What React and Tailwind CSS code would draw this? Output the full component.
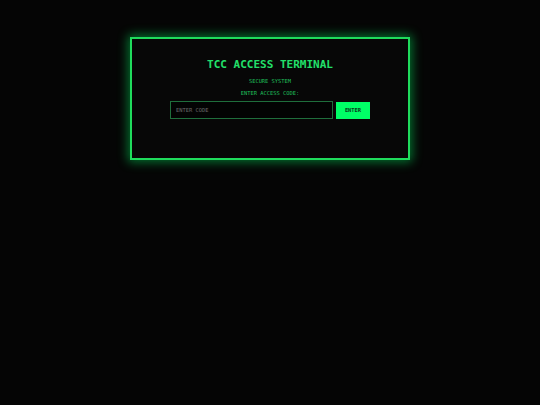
import React, { useState } from "react"

export default function App() {

    const [code, setCode] = useState("")

    return (
        <div className="min-h-screen w-full bg-[#050505] pt-[37px] font-['DejaVu_Sans_Mono',monospace]" >
            <div
                className="mx-auto w-[280px] h-[123px] border-2 border-[#1fdc5c] bg-[#070707]
                shadow-[0_0_10px_2px_rgba(0,255,102,0.45)] flex flex-col items-center pt-[19px]"
            >
                <h1 className="text-[11px] leading-[14px] font-bold text-[#22e06a] tracking-normal" >
                    TCC ACCESS TERMINAL
                </h1>
                <p className="mt-[5px] text-[5.4px] leading-[8px] text-[#1fbf5a]" >
                    SECURE SYSTEM
                </p>
                <p className="mt-[4px] text-[5.4px] leading-[8px] text-[#1fbf5a]" >
                    ENTER ACCESS CODE:
                </p>
                <div className="mt-[4px] flex items-center gap-[3px]" >
                    <input
                        value={code}
                        onChange={(e) => setCode(e.target.value)}
                        placeholder="ENTER CODE"
                        className="w-[163px] h-[18px] bg-[#030303] border border-[#1f6e3c] px-[5px]
                        text-[5.4px] text-[#22e06a] placeholder:text-[#6b6b6b] outline-none font-['DejaVu_Sans_Mono',monospace]"
                    />
                    <button
                        className="w-[34px] h-[17px] bg-[#00ff66] text-[#0a3a1c] text-[5.4px] font-bold
                        flex items-center justify-center font-['DejaVu_Sans_Mono',monospace]"
                    >
                        ENTER
                    </button>
                </div>
            </div>
        </div>
    )

}
